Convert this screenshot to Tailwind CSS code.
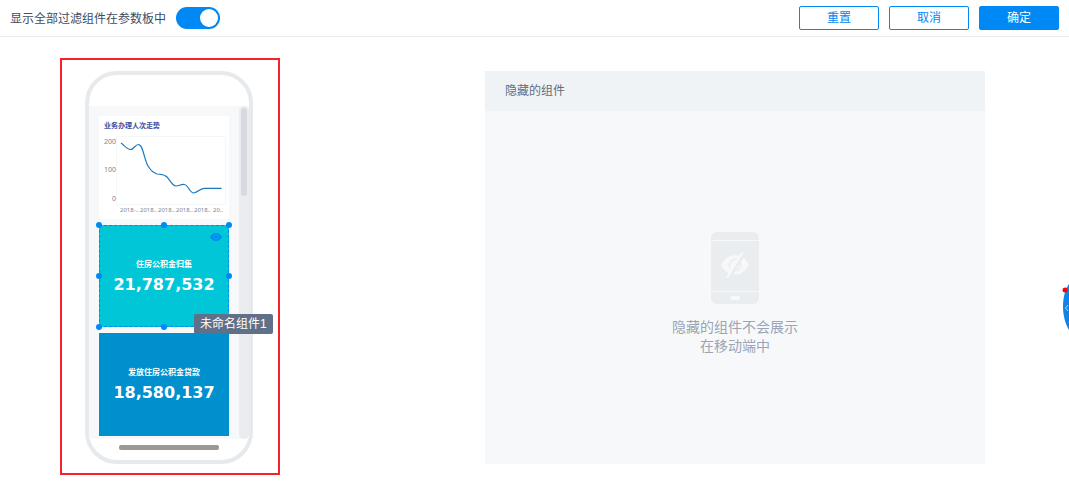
<!DOCTYPE html>
<html lang="zh-CN">
<head>
<meta charset="utf-8">
<meta name="viewport" content="width=device-width, initial-scale=1">
<title>移动端布局</title>
<script src="https://cdn.jsdelivr.net/npm/@tailwindcss/browser@4"></script>
</head>
<body class="relative min-h-screen overflow-x-hidden bg-white font-['Liberation_Sans','Noto_Sans_CJK_SC',sans-serif] text-xs text-[#3d4d66]">
<header class="flex h-[37px] items-center justify-between border-b border-[#e6e9ed] px-2.5">
  <label class="flex items-center gap-2.5">
    <span class="pt-0.5">显示全部过滤组件在参数板中</span>
    <input type="checkbox" role="switch" checked class="h-[22px] w-11 appearance-none rounded-full bg-gray-300 p-0.5 before:block before:size-[18px] before:rounded-full before:bg-white checked:bg-[#0088f5] checked:before:ml-[22px]">
  </label>
  <div class="flex gap-2.5">
    <button type="button" class="h-6 w-20 rounded-xs border border-[#0088f5] text-[#0088f5]">重置</button>
    <button type="button" class="h-6 w-20 rounded-xs border border-[#0088f5] text-[#0088f5]">取消</button>
    <button type="button" class="h-6 w-20 rounded-xs border border-[#0088f5] bg-[#0088f5] text-white">确定</button>
  </div>
</header>

<main class="flex items-start pt-[21px] pr-[84px] pb-6 pl-[60px]">
  <section class="shrink-0 border-2 border-[#f5222d] pt-[11px] pr-[25px] pb-[9px] pl-[23px]" aria-label="移动端预览">
    <div class="w-[168px] rounded-[32px] border-4 border-[#e6eaed] bg-white pt-[31px]">
      <div class="flex h-[333px] justify-between bg-[#f7f8fa] pl-2.5">
        <div class="flex w-[130px] flex-col gap-1.5 pt-2.5">
          <article class="bg-white">
            <h2 class="px-[5px] pt-1 text-[7px] leading-3 font-bold text-[#4052a0]">业务办理人次走势</h2>
            <svg class="block w-full font-['Noto_Sans',sans-serif]" viewBox="0 0 130 87" font-size="7" fill="#7d8493" role="img" aria-label="业务办理人次走势">
              <rect x="17.5" y="4.5" width="109" height="68" fill="none" stroke="#f5f6f7"/>
              <g text-anchor="end">
                <text x="17" y="12">200</text><text x="17" y="40">100</text><text x="17" y="69">0</text>
              </g>
              <path d="M22 11C25 13 28 17.500 31.500 17.500C35 17.500 36 12.500 39.500 12.500C44 12.500 45 27 49 34C52 39 55 41 58 42C62 42.500 65 42 68 45C71 48 73 54 77 54C80 54 82 52 85.500 52.500C89 53 91 61 94.500 61C98 61 101 56.500 105 56.300H122.500" fill="none" stroke="#1b78bb" stroke-width="1.200"/>
              <g font-size="6">
                <text x="21" y="80">2018-..</text><text x="41" y="80">2018..</text><text x="59" y="80">2018..</text><text x="77" y="80">2018..</text><text x="95" y="80">2018..</text><text x="114" y="80">20..</text>
              </g>
            </svg>
          </article>
          <article class="relative flex h-[102px] flex-col items-center border border-dashed border-[#0088f5] bg-[#00c6d7] pt-[33px] text-white">
            <h2 class="text-[8px] leading-3 font-bold">住房公积金归集</h2>
            <p class="mt-0.5 font-['DejaVu_Sans'] text-base leading-6 font-bold">21,787,532</p>
            <button type="button" aria-label="显示或隐藏组件" class="absolute top-1.5 right-1.5">
              <svg class="h-2.5 w-3" viewBox="0 0 12 10" fill="none"><path d="M0 5C3 -.5 9 -.5 12 5C9 10.500 3 10.500 0 5Z" fill="#0088f5"/><circle cx="6" cy="5" r="2.300" stroke="#00b4e4"/></svg>
            </button>
            <i class="absolute -top-1 -left-1 size-1.5 rounded-full bg-[#0088f5]"></i>
            <i class="absolute -top-1 left-1/2 size-1.5 -translate-x-1/2 rounded-full bg-[#0088f5]"></i>
            <i class="absolute -top-1 -right-1 size-1.5 rounded-full bg-[#0088f5]"></i>
            <i class="absolute top-1/2 -left-1 size-1.5 -translate-y-1/2 rounded-full bg-[#0088f5]"></i>
            <i class="absolute top-1/2 -right-1 size-1.5 -translate-y-1/2 rounded-full bg-[#0088f5]"></i>
            <i class="absolute -bottom-1 -left-1 size-1.5 rounded-full bg-[#0088f5]"></i>
            <i class="absolute -bottom-1 left-1/2 size-1.5 -translate-x-1/2 rounded-full bg-[#0088f5]"></i>
            <i class="absolute -right-1 -bottom-1 size-1.5 rounded-full bg-[#0088f5]"></i>
            <span role="tooltip" class="absolute top-[88px] left-[94px] z-10 rounded-xs bg-[#5f7088] px-1.5 leading-5 whitespace-nowrap text-white">未命名组件1</span>
          </article>
          <article class="flex h-[103px] flex-col items-center bg-[#0090ce] pt-[34px] text-white">
            <h2 class="text-[8px] leading-3 font-bold">发放住房公积金贷款</h2>
            <p class="mt-0.5 font-['DejaVu_Sans'] text-base leading-6 font-bold">18,580,137</p>
          </article>
        </div>
        <div class="w-2.5 rounded-full bg-[#ebecf0] px-0.5 pt-0.5"><div class="h-[88px] rounded-full bg-[#d7d9de]"></div></div>
      </div>
      <div class="flex h-[21px] justify-center pt-1.5"><div class="h-[5px] w-[100px] rounded-xs bg-[#999999]"></div></div>
    </div>
  </section>

  <section class="mt-[13px] ml-[205px] flex h-[393px] flex-1 flex-col bg-[#f7f8fa]">
    <h2 class="bg-[#f0f3f6] px-5 leading-10 text-[#5f6c80]">隐藏的组件</h2>
    <div class="flex flex-1 flex-col items-center pt-[121px]">
      <svg class="h-[72px] w-12" viewBox="0 0 48 72" fill="none" aria-hidden="true">
        <rect width="48" height="72" rx="6" fill="#e9edf0"/>
        <path d="M0 8.500H48M0 59.500H48" stroke="#f7f8fa"/>
        <rect x="19" y="64" width="10" height="4" rx="2" fill="#f7f8fa"/>
        <path d="M10 33C16 20 32 20 38 33C32 46 16 46 10 33Z" fill="#f7f8fa"/>
        <path d="M19 36A6 6 0 0 1 26 27.500M29 30A6 6 0 0 1 22 38.500" stroke="#e9edf0" stroke-width="1.500"/>
        <path d="M33.500 21L18.500 46" stroke="#e9edf0" stroke-width="3"/>
        <path d="M31 21L16.500 45" stroke="#f7f8fa" stroke-width="2" stroke-linecap="round"/>
      </svg>
      <p class="mt-3.5 text-center text-sm leading-[19px] text-[#9ba5b5]">隐藏的组件不会展示<br>在移动端中</p>
    </div>
  </section>
</main>

<button type="button" aria-label="展开侧栏" class="absolute top-[280px] right-0">
  <svg class="h-[52px] w-2" viewBox="0 0 8 52" fill="none"><path d="M8 4C0 15 0 37 8 50Z" fill="#0f83e6"/><path d="M7 25L4.500 28L7 31" stroke="#a9d5fa"/><circle cx="4" cy="10" r="2.500" fill="#ff0000"/></svg>
</button>
</body>
</html>
